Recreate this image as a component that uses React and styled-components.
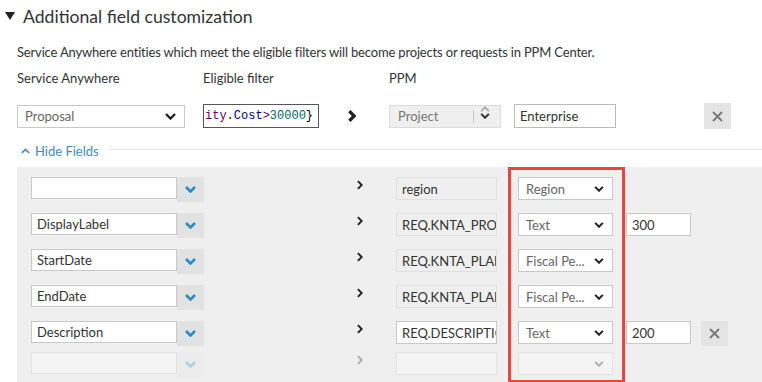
import styled, { createGlobalStyle } from "styled-components";

const Global = createGlobalStyle`
  body {
    margin: 0;
    background: #fff;
    font-family: "Lato", "Open Sans", sans-serif;
    color: #333;
  }
`;

const Page = styled.div`
  position: relative;
  width: 762px;
  height: 382px;
  overflow: hidden;
`;

const Header = styled.div`
  display: flex;
  align-items: center;
  gap: 8px;
  height: 32px;
  padding-left: 5px;
  font-size: 17.6px;
  color: #333;
  font-weight: 400;
`;

const Triangle = styled.span`
  width: 0;
  height: 0;
  border-left: 5px solid transparent;
  border-right: 5px solid transparent;
  border-top: 8px solid #222;
`;

const Desc = styled.p`
  margin: 12px 0 0 17px;
  font-size: 13px;
  letter-spacing: -0.17px;
  line-height: 16px;
  color: #333;
`;

const Grid = styled.div`
  display: grid;
  grid-template-columns: 186px 116px 70px 125px 190px 27px;
  align-items: center;
  padding-left: 17px;
`;

const Labels = styled(Grid)`
  margin-top: 10px;
  font-size: 13px;
  line-height: 16px;
  color: #333;
`;

const TopRow = styled(Grid)`
  margin-top: 17px;
  height: 26px;
`;

const Select = styled.div`
  display: flex;
  align-items: center;
  justify-content: space-between;
  box-sizing: border-box;
  width: ${(p) => p.$w}px;
  height: ${(p) => p.$h || 23}px;
  padding: 0 8px 0 7px;
  background: ${(p) => (p.$disabled ? "#f4f4f4" : "#fff")};
  border: 1px solid ${(p) => (p.$disabled ? "#e2e2e2" : "#c8c8c8")};
  font-size: 13px;
  color: #666;
  white-space: nowrap;
`;

const FilterBox = styled.div`
  display: flex;
  align-items: center;
  box-sizing: border-box;
  width: 116px;
  height: 24px;
  border: 1px solid #555;
  padding-left: 1px;
  font-family: "Liberation Mono", monospace;
  font-size: 12px;
  white-space: nowrap;
`;

const Tok = styled.span`
  color: ${(p) => p.$c};
`;

const ArrowCell = styled.div`
  display: flex;
  justify-content: flex-end;
  padding-right: 33px;
`;

const ProjectSelect = styled.div`
  display: flex;
  align-items: center;
  box-sizing: border-box;
  width: 112px;
  height: 23px;
  background: #efefef;
  border: 1px solid #dcdcdc;
  font-size: 13px;
  color: #777;
  padding-left: 8px;
`;

const Sep = styled.span`
  width: 1px;
  height: 13px;
  background: #c8c8c8;
  margin-left: auto;
  margin-right: 6px;
`;

const DoubleChev = styled.div`
  display: flex;
  flex-direction: column;
  gap: 1px;
  margin-right: 10px;
  margin-top: -8px;
`;

const TextInput = styled.div`
  display: flex;
  align-items: center;
  box-sizing: border-box;
  width: ${(p) => p.$w}px;
  height: ${(p) => p.$h || 22}px;
  padding-left: 5px;
  background: ${(p) => (p.$readonly ? "#efefef" : p.$disabled ? "#f4f4f4" : "#fff")};
  border: 1px solid ${(p) => (p.$readonly ? "#e0e0e0" : p.$disabled ? "#e2e2e2" : p.$dark ? "#bbb" : "#c8c8c8")};
  font-size: 13px;
  color: #333;
  white-space: nowrap;
  overflow: hidden;
`;

const CloseBtn = styled.div`
  display: flex;
  align-items: center;
  justify-content: center;
  width: 27px;
  height: ${(p) => p.$h || 26}px;
  background: #e4e4e4;
`;

const HideRow = styled.div`
  display: flex;
  align-items: center;
  gap: 5px;
  margin: 13px 0 0 21px;
  height: 18px;
  font-size: 13px;
  color: #3b8fb5;
`;

const Rule = styled.span`
  flex: 1;
  height: 1px;
  background: #e6e6e6;
  margin-left: 4px;
  margin-top: -3px;
`;

const Panel = styled.div`
  margin: 7px 0 0 17px;
  background: #efefef;
  padding: 10px 0 5px 14px;
`;

const FieldRow = styled.div`
  display: grid;
  grid-template-columns: 173px 192px 101px 129px 75px 27px;
  align-items: start;
  height: ${(p) => p.$h || 36}px;
`;

const Combo = styled.div`
  display: flex;
  align-items: flex-start;
`;

const DropBtn = styled.div`
  display: flex;
  align-items: center;
  justify-content: center;
  width: 27px;
  height: 25px;
  background: ${(p) => (p.$disabled ? "#ececec" : "#e2e2e2")};
`;

const TypeCell = styled.div`
  padding-left: 21px;
`;

const ArrowWrap = styled.div`
  display: flex;
  justify-content: flex-end;
  padding: 3px 33px 0 0;
`;

const Highlight = styled.div`
  position: absolute;
  left: 508px;
  top: 167px;
  width: 117px;
  height: 216px;
  box-sizing: border-box;
  border: 3px solid #e5473f;
  pointer-events: none;
`;

const Chevron = ({ color = "#222", w = 11, h = 7, sw = 2.4, up }) => (
  <svg width={w} height={h} viewBox="0 0 11 7">
    <polyline
      points={up ? "1,6 5.5,1.5 10,6" : "1,1 5.5,5.5 10,1"}
      fill="none"
      stroke={color}
      strokeWidth={sw}
    />
  </svg>
);

const Arrow = ({ color = "#222", w = 7, h = 11, sw = 2.4 }) => (
  <svg width={w} height={h} viewBox="0 0 7 11">
    <polyline points="1,1 5.5,5.5 1,10" fill="none" stroke={color} strokeWidth={sw} />
  </svg>
);

const Cross = ({ color = "#777" }) => (
  <svg width="11" height="11" viewBox="0 0 11 11">
    <path d="M1 1 L10 10 M10 1 L1 10" stroke={color} strokeWidth="1.8" />
  </svg>
);

const fields = [
  { sa: "", ppm: "region", type: "Region", len: null, ro: true },
  { sa: "DisplayLabel", ppm: "REQ.KNTA_PRO.", type: "Text", len: "300", ro: true },
  { sa: "StartDate", ppm: "REQ.KNTA_PLAN", type: "Fiscal Pe...", len: null, ro: true },
  { sa: "EndDate", ppm: "REQ.KNTA_PLAN", type: "Fiscal Pe...", len: null, ro: true },
  { sa: "Description", ppm: "REQ.DESCRIPTIO", type: "Text", len: "200", ro: false, remove: true, h: 31 },
];

export default function App() {
  return (
    <>
      <Global />
      <Page>
        <Header>
          <Triangle />
          Additional field customization
        </Header>
        <Desc>
          Service Anywhere entities which meet the eligible filters will become projects or requests in PPM Center.
        </Desc>
        <Labels>
          <div>Service Anywhere</div>
          <div>Eligible filter</div>
          <div />
          <div>PPM</div>
        </Labels>
        <TopRow>
          <Select $w={168}>
            Proposal
            <Chevron />
          </Select>
          <FilterBox>
            <Tok $c="#660066">ity</Tok>
            <Tok $c="#000">.</Tok>
            <Tok $c="#000088">Cost</Tok>
            <Tok $c="#660066">&gt;</Tok>
            <Tok $c="#006666">30000</Tok>
            <Tok $c="#000">{"}"}</Tok>
          </FilterBox>
          <ArrowCell>
            <Arrow w={8} h={12} sw={3} />
          </ArrowCell>
          <ProjectSelect>
            Project
            <Sep />
            <DoubleChev>
              <Chevron up color="#aaa" w={10} h={6} sw={2} />
              <Chevron color="#333" w={10} h={6} sw={2.4} />
            </DoubleChev>
          </ProjectSelect>
          <TextInput $w={102} $h={24} $dark>
            Enterprise
          </TextInput>
          <CloseBtn>
            <Cross />
          </CloseBtn>
        </TopRow>
        <HideRow>
          <Chevron up color="#3b8fb5" w={9} h={6} sw={2} />
          Hide Fields
          <Rule />
        </HideRow>
        <Panel>
          {fields.map((f, i) => (
            <FieldRow key={i} $h={f.h}>
              <Combo>
                <TextInput $w={146}>{f.sa}</TextInput>
                <DropBtn>
                  <Chevron color="#2a8bc6" w={11} h={7} sw={2.6} />
                </DropBtn>
              </Combo>
              <ArrowWrap>
                <Arrow w={6} h={10} sw={2.2} />
              </ArrowWrap>
              <TextInput $w={101} $h={23} $readonly={f.ro}>
                {f.ppm}
              </TextInput>
              <TypeCell>
                <Select $w={95}>
                  {f.type}
                  <Chevron w={10} h={6} sw={2.4} />
                </Select>
              </TypeCell>
              <div>{f.len && <TextInput $w={65} $h={23}>{f.len}</TextInput>}</div>
              <div>
                {f.remove && (
                  <CloseBtn $h={25}>
                    <Cross />
                  </CloseBtn>
                )}
              </div>
            </FieldRow>
          ))}
          <FieldRow $h={26}>
            <Combo>
              <TextInput $w={146} $disabled />
              <DropBtn $disabled>
                <Chevron color="#a9d0e6" w={11} h={7} sw={2.6} />
              </DropBtn>
            </Combo>
            <ArrowWrap>
              <Arrow color="#aaa" w={6} h={10} sw={2.2} />
            </ArrowWrap>
            <TextInput $w={101} $h={23} $disabled />
            <TypeCell>
              <Select $w={95} $disabled>
                <span />
                <Chevron color="#aaa" w={10} h={6} sw={2} />
              </Select>
            </TypeCell>
          </FieldRow>
        </Panel>
        <Highlight />
      </Page>
    </>
  );
}
